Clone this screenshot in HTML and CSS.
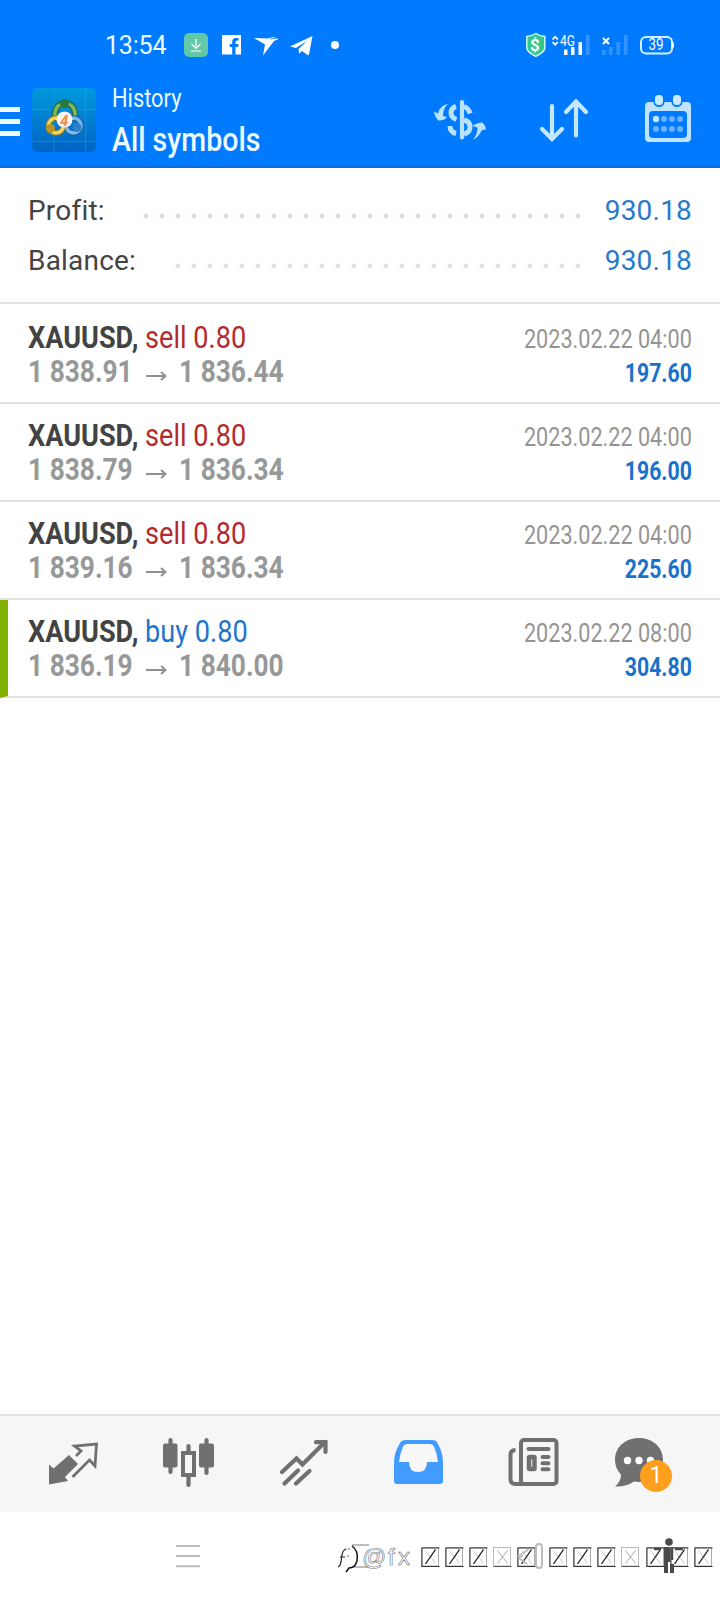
FILE: index.html
```html
<!DOCTYPE html>
<html lang="en">
<head>
<meta charset="utf-8">
<title>History</title>
<link rel="stylesheet" href="styles.css">
</head>
<body>
<div class="screen">
  <header class="header">
    <div class="status">
      <span class="time">13:54</span>
      <svg class="notices" width="164" height="28" viewBox="182 31 164 28" fill="#fff">
        <rect x="184" y="33" width="24" height="24" rx="5" fill="#62c8a8"/>
        <path d="M196 39v9m-4.500-4l4.500 4.500 4.500-4.500M191 51h10" fill="none" stroke="#fff" stroke-width="1.200"/>
        <path d="M222 35h19v19.500h-5.500v-7.500h2.500l.5-3h-3v-2q0-1.500 1.500-1.500h1.500v-2.500h-2.500q-3.800 0-3.800 4v2h-2.500v3h2.500v7.500H222z"/>
        <path d="M254 38l14 .5 5-1.500 5.500 2-4.500 2-11 14.500 2-11z"/>
        <path d="M270 39l6-.6" stroke="#007aff" stroke-width=".8"/>
        <path d="M290 46.500l22.500-10.500-3.500 18.500q-.5 1-1.500.5l-5.500-4 -3 2.800-.5-4.800 8.500-8-11 7z"/>
        <circle cx="335" cy="45" r="4"/>
      </svg>
      <svg class="signals" width="152" height="28" viewBox="524 31 152 28" fill="#fff">
        <path d="M526.800 36.500q5-.5 9-3 4 2.500 9 3v12q-1 4-9 7.800-8-3.800-9-7.800z" fill="#35c78b" stroke="#d9fff4" stroke-width="1.400"/>
        <text x="530" y="51" class="coin">$</text>
        <path d="M552.500 39.500l2.700-2.700 2.700 2.700M552.500 42l2.700 2.700 2.700-2.700" fill="none" stroke="#fff" stroke-width="1.700"/>
        <text x="560" y="46" class="net" textLength="15" lengthAdjust="spacingAndGlyphs">4G</text>
        <path d="M564 49.500h3.500v5.500H564zM571 47h3.500v8H571zM578.500 42h3.500v13h-3.500z"/>
        <path d="M586 35h3.500v20H586zM602 50h3.500v5H602zM609 47h3.500v8H609zM616.500 42h3.500v13h-3.500zM624 35h3.500v20H624z" opacity=".2"/>
        <path d="M603 38l6 6m0-6l-6 6" stroke="#fff" stroke-width="2"/>
        <rect x="641" y="37" width="31" height="16.500" rx="5" fill="none" stroke="#d3f1ff" stroke-width="2"/>
        <path d="M672 41q2 1 2 4t-2 4z"/>
        <text x="648.500" y="50" class="charge" textLength="15" lengthAdjust="spacingAndGlyphs">39</text>
      </svg>
    </div>
    <div class="appbar">
      <span class="burger"></span>
      <svg class="logo" width="64" height="64" viewBox="32 88 64 64">
        <defs>
          <linearGradient id="sea" x1="0" y1="0" x2="0" y2="1"><stop offset="0" stop-color="#0099dc"/><stop offset="1" stop-color="#0064c4"/></linearGradient>
        </defs>
        <rect x="32" y="88" width="64" height="64" rx="6" fill="url(#sea)"/>
        <path d="M32 109.500h64M32 141.500h64M54 88v64M85.500 88v64" stroke="#3aa4d8" stroke-width=".7" opacity=".6"/>
        <g fill="none">
          <path d="M56 119q-3-7 2-13 7-6 14 0 5 6 2 13" stroke="#27653a" stroke-width="6"/>
          <path d="M56 119q-3-7 2-13 7-6 14 0 5 6 2 13" stroke="#7ab85c" stroke-width="3.600"/>
          <circle cx="73.500" cy="125.500" r="7.500" stroke="#1c5a98" stroke-width="5.500"/>
          <circle cx="73.500" cy="125.500" r="7.500" stroke="#79b9ee" stroke-width="3.600"/>
          <circle cx="56" cy="125.500" r="7.500" stroke="#8d7a26" stroke-width="5.500"/>
          <circle cx="56" cy="125.500" r="7.500" stroke="#ecd65c" stroke-width="3.600"/>
        </g>
        <circle cx="64.500" cy="103.500" r="4.500" fill="#267a3a"/><circle cx="50.500" cy="128.500" r="4.500" fill="#b99722"/><circle cx="77" cy="127.500" r="4.500" fill="#2b7fcc"/>
        <circle cx="64.500" cy="119.500" r="8" fill="#fff5ee"/>
        <text x="60" y="125.500" class="four">4</text>
      </svg>
      <div class="titles">
        <span class="sub">History</span>
        <span class="main">All symbols</span>
      </div>
      <svg class="act dollar" width="54" height="44" viewBox="433 97 54 44">
        <g fill="none" stroke="#b9e2ff" stroke-width="5">
          <path d="M462 101v35.500" stroke-width="4.200" stroke-linecap="round"/>
          <path d="M456 105.500q-5 1.500-5 6.500 0 4.500 5.500 6.500M450 125q0 6 6 7.500M464 105.500q4.500 1.500 6 7M464 119q6 1.500 6 7 0 5.500-6 7"/>
        </g>
        <g fill="#b9e2ff">
          <path d="M448 103q-5 4-5 12l4 1q-3 4-9 3.500-3.500-4-4-9l4 2q2-8.500 10-9.500z"/>
          <path d="M473 139q6-3.500 9-10l4-.5q0-3.500-3.500-7-6 0-10 3.500l5 1.500q0 7-4.500 12.500z"/>
        </g>
      </svg>
      <svg class="act sort" width="52" height="46" viewBox="538 96 52 46" fill="none" stroke="#c4e8ff" stroke-width="4.200" stroke-linecap="round">
        <path d="M552 105v33M542 128l10 10 10-10M576 134.500V101M566 111l10-10.500 10 10.500"/>
      </svg>
      <svg class="act cal" width="48" height="50" viewBox="644 94 48 50">
        <path d="M649 102h38q4 0 4 4v32q0 4-4 4h-38q-4 0-4-4v-32q0-4 4-4z" fill="#bfe4ff"/>
        <rect x="649" y="111" width="38" height="27" rx="4" fill="#007aff"/>
        <rect x="653.500" y="93" width="11" height="14" rx="5" fill="#007aff"/><rect x="671.500" y="93" width="11" height="14" rx="5" fill="#007aff"/>
        <rect x="655" y="95" width="8" height="10" rx="3.500" fill="#c8ebff"/><rect x="673" y="95" width="8" height="10" rx="3.500" fill="#c8ebff"/>
        <g fill="#6ab2ff"><circle cx="656" cy="119" r="3.200" fill="#c4e8ff"/><circle cx="664" cy="119" r="3"/><circle cx="672" cy="119" r="3"/><circle cx="680" cy="119" r="3"/><circle cx="656" cy="129" r="3"/><circle cx="664" cy="129" r="3"/><circle cx="672" cy="129" r="3"/><circle cx="680" cy="129" r="3"/></g>
      </svg>
    </div>
  </header>

  <section class="summary">
    <div class="total"><span>Profit:</span><i class="dots"></i><span class="sum">930.18</span></div>
    <div class="total"><span>Balance:</span><i class="dots short"></i><span class="sum">930.18</span></div>
  </section>

  <main class="deals">
    <article class="deal">
      <div class="left"><p class="order"><b>XAUUSD,</b> <span class="sell">sell 0.80</span></p>
        <p class="prices"><span class="price">1 838.91</span><svg class="arrow" width="22" height="10" viewBox="0 0 22 10"><path d="M0 5h19.500M15 1l4.500 4L15 9"/></svg><span class="price">1 836.44</span></p></div>
      <div class="right"><p class="date">2023.02.22 04:00</p><p class="gain">197.60</p></div>
    </article>
    <article class="deal">
      <div class="left"><p class="order"><b>XAUUSD,</b> <span class="sell">sell 0.80</span></p>
        <p class="prices"><span class="price">1 838.79</span><svg class="arrow" width="22" height="10" viewBox="0 0 22 10"><path d="M0 5h19.500M15 1l4.500 4L15 9"/></svg><span class="price">1 836.34</span></p></div>
      <div class="right"><p class="date">2023.02.22 04:00</p><p class="gain">196.00</p></div>
    </article>
    <article class="deal">
      <div class="left"><p class="order"><b>XAUUSD,</b> <span class="sell">sell 0.80</span></p>
        <p class="prices"><span class="price">1 839.16</span><svg class="arrow" width="22" height="10" viewBox="0 0 22 10"><path d="M0 5h19.500M15 1l4.500 4L15 9"/></svg><span class="price">1 836.34</span></p></div>
      <div class="right"><p class="date">2023.02.22 04:00</p><p class="gain">225.60</p></div>
    </article>
    <article class="deal marked">
      <div class="left"><p class="order"><b>XAUUSD,</b> <span class="buy">buy 0.80</span></p>
        <p class="prices"><span class="price">1 836.19</span><svg class="arrow" width="22" height="10" viewBox="0 0 22 10"><path d="M0 5h19.500M15 1l4.500 4L15 9"/></svg><span class="price">1 840.00</span></p></div>
      <div class="right"><p class="date">2023.02.22 08:00</p><p class="gain">304.80</p></div>
    </article>
  </main>

  <nav class="tabs">
    <svg width="50" height="60" viewBox="49 1435 50 60">
      <path d="M69 1455l9 9-13 13 3 4-19 3.500v-20l4.500 4z" fill="#707070"/>
      <path d="M76 1456l5-5-6.500-5 22-2-1.500 22-5.500-6-17 17" fill="none" stroke="#707070" stroke-width="2.800"/>
    </svg>
    <svg width="52" height="60" viewBox="163 1435 52 60" fill="#707070">
      <rect x="163" y="1443.500" width="14.500" height="24" rx="2"/><rect x="199" y="1443.500" width="15" height="24" rx="2"/>
      <path d="M170.500 1440v32M206.500 1440v33M188.500 1446v7M188.500 1477v8" stroke="#707070" stroke-width="4.200" stroke-linecap="round"/>
      <rect x="183" y="1453" width="11" height="22" fill="none" stroke="#707070" stroke-width="4"/>
    </svg>
    <svg width="50" height="60" viewBox="278 1435 50 60" fill="none" stroke="#707070" stroke-width="4.200">
      <path d="M281 1472l14.500-13.500 6 6L324 1442M283.500 1483.500l13.500-13M295 1483.500l13.500-12.500" stroke-linecap="round"/>
      <path d="M315 1442.200h9.500v9.800" stroke-linecap="round"/>
    </svg>
    <svg width="50" height="60" viewBox="393 1435 50 60">
      <path d="M406 1440h26q4 0 5.500 3 5.500 10 5.500 19v19q0 3-3 3h-43q-3 0-3-3v-19q0-9 6-19 1.500-3 6-3z" fill="#429bff"/>
      <path d="M407 1444h23q3 0 4 2.500 3 7 4 15.500h-11q0 10-9 10t-9-10h-10q1-8.500 4-15.500 1-2.500 4-2.500z" fill="#f8f8f8"/>
    </svg>
    <svg width="52" height="60" viewBox="507 1435 52 60" fill="none" stroke="#707070" stroke-width="4">
      <rect x="521" y="1440" width="35.500" height="44" rx="3"/>
      <path d="M515.500 1450q-5 0-5 4.500v25q0 4.500 5 4.500h8"/>
      <path d="M528.500 1449h20M542.500 1457h6M542.500 1463.200h6M542.500 1469.200h6" stroke-linecap="round"/>
      <rect x="529" y="1457" width="5.500" height="12" rx=".5" stroke-width="4.500"/>
    </svg>
    <div class="chat">
      <svg width="50" height="60" viewBox="614 1435 50 60">
        <path d="M639 1438c14 0 24 9.500 24 22s-10 22-24 22l-5-.5q-8 5.500-19 5 6-5 6-12-6-6-6-14.500c0-12.500 10-22 24-22z" fill="#707070"/>
        <g fill="#fff"><circle cx="627.500" cy="1460.500" r="3.700"/><circle cx="639" cy="1460.500" r="3.700"/><circle cx="650.500" cy="1460.500" r="3.700"/></g>
      </svg>
      <span class="badge">1</span>
    </div>
  </nav>

  <footer class="system">
    <svg width="720" height="88" viewBox="0 1512 720 88" fill="none">
      <path d="M176 1546h24M176 1556h24M176 1566.300h24" stroke="#bcbcbc" stroke-width="2"/>
      <path d="M352 1545h17M352 1567h17" stroke="#bcbcbc" stroke-width="2"/>
      <g fill="#4a4a4a"><circle cx="669" cy="1542" r="3.800"/><path d="M653 1547h32v3.500l-11 1.500v21h-4v-11h-2v11h-4v-21l-11-1.500z"/></g>
      <path d="M338 1567q3-1 3.500-9 .7-8.500 5-9M340 1557h5" stroke="#222" stroke-width="1.200"/>
      <path d="M352 1546q7 5 5 15-2 7-8 7l-3 4" stroke="#111" stroke-width="1.500"/>
      <path d="M347 1556h2M348 1549h2" stroke="#999" stroke-width="1.500"/>
      <text class="mark-text" x="362 388 398" y="1565">@fx</text>
      <defs>
        <g id="cell"><rect width="17" height="18.500" fill="#fff" stroke="#aaa"/><path d="M.5 19V.5H18M0 19h18" stroke="#333"/><path d="M4 3l10 13" stroke="#bbb" stroke-width=".8"/><path d="M14 2L4 16.500" stroke="#111" stroke-width="1.300"/></g>
        <g id="pale"><rect width="17" height="18.500" fill="#fff" stroke="#bbb"/><path d="M0 19h18" stroke="#555"/><path d="M4 3l10 13M14 3L4 16" stroke="#999" stroke-width=".8"/></g>
      </defs>
      <use href="#cell" x="421.500" y="1547.500"/><use href="#cell" x="445.500" y="1547.500"/><use href="#cell" x="469.500" y="1547.500"/><use href="#pale" x="493.500" y="1547.500"/><use href="#cell" x="517.500" y="1547.500"/>
      <use href="#cell" x="549.500" y="1547.500"/><use href="#cell" x="573.500" y="1547.500"/><use href="#cell" x="597.500" y="1547.500"/><use href="#pale" x="621.500" y="1547.500"/><use href="#cell" x="646.500" y="1547.500"/><use href="#cell" x="670.500" y="1547.500"/><use href="#cell" x="694.500" y="1547.500"/>
      <path d="M529 1549l-10 7 4 .5M519 1558l8 6" stroke="#bcbcbc" stroke-width="2"/>
      <rect x="536" y="1544" width="6" height="24" rx="3" fill="#fff" stroke="#bcbcbc" stroke-width="2"/>
      <path d="M666 1548v25M672 1564v9" stroke="#4a4a4a" stroke-width="4"/>
      <path d="M672 1547v13M654 1549h7M675 1549h8" stroke="#4a4a4a" stroke-width="2.500"/>
    </svg>
  </footer>
</div>
</body>
</html>
```
FILE: styles.css
```css
* { box-sizing: border-box; }
body, p { margin: 0; }
body { font-family: Roboto, "Liberation Sans", sans-serif; background: #fff; }
svg { display: block; flex: none; }
.screen { width: 720px; height: 1600px; display: flex; flex-direction: column; overflow: hidden; }

.header { height: 168px; background: #007aff; color: #ecfbff; border-bottom: 2px solid #0a6fd6; }
.status { display: flex; align-items: center; height: 80px; padding: 10px 44px 0 105px; }
.time { width: 77px; padding-top: 1px; font-size: 25px; line-height: 28px; letter-spacing: -.2px; white-space: nowrap; }
.signals { margin-left: auto; }
.coin { font-size: 17px; font-weight: 700; fill: #fff; }
.net { font-size: 15px; fill: #fff; }
.charge { font-size: 16px; fill: #fff; }
.four { font-size: 15px; font-weight: 700; font-style: italic; fill: #ef8d4b; }
.appbar { display: flex; align-items: center; height: 80px; }
.burger { width: 20px; height: 29px; margin: 2px 12px 0 0; background: repeating-linear-gradient(#ecfbff 0 5px, transparent 5px 12px); }
.titles { display: flex; flex-direction: column; width: 200px; margin: 0 0 0 16px; }
.sub, .main { transform: scaleX(.84); transform-origin: left; white-space: nowrap; }
.sub { font-size: 26px; line-height: 38px; }
.main { font-size: 34px; font-weight: 500; line-height: 44px; }
.dollar { margin-left: 121px; }
.sort { margin-left: 51px; }
.cal { margin-left: 54px; margin-bottom: 2px; }

.summary { height: 136px; padding: 18px 28px 0; border-bottom: 2px solid #e3e3e3; color: #444; font-size: 28px; line-height: 50px; }
.total { display: flex; align-items: center; letter-spacing: .2px; }
.dots { width: 448px; height: 16px; margin: 0 18px 0 auto; background: radial-gradient(circle at 8px 8px, #e2e2e2 2.300px, transparent 2.900px) 0 0 / 16px 16px; position: relative; top: 5px; }
.dots.short { width: 416px; }
.sum { width: 88px; color: #2b78c8; text-align: right; }

.deal { display: flex; justify-content: space-between; height: 98px; padding: 14px 28px 0; border-bottom: 2px solid #e3e3e3; line-height: 34px; white-space: nowrap; }
.deal:first-child { height: 100px; padding-top: 16px; }
.deal.marked { padding-left: 20px; border-left: 8px solid #80b000; }
.order { font-size: 32px; transform: scaleX(.847); transform-origin: left; }
.order b { color: #434343; }
.sell { color: #b52a2c; }
.buy { color: #1e76cc; }
.prices { display: flex; align-items: center; width: 260px; color: #979999; font-size: 32px; font-weight: 700; }
.price { width: 106px; transform: scaleX(.822); transform-origin: left; }
.arrow { margin: 9px 11px 0 12px; fill: none; stroke: #8f9191; stroke-width: 2; }
.right { padding-top: 2px; text-align: right; font-size: 26px; }
.date, .gain { transform-origin: right; }
.date { color: #949494; transform: scaleX(.832); }
.gain { color: #1872cc; font-weight: 700; transform: scaleX(.815); }

.tabs { display: flex; height: 98px; margin-top: auto; padding: 19px 0 0 49px; background: #f6f6f6; border-top: 2px solid #e3e3e3; }
.tabs > svg { margin-right: 64px; }
.chat { position: relative; margin-left: -9px; }
.badge { position: absolute; left: 26px; top: 25px; width: 32px; height: 32px; border-radius: 50%; background: #ff9f1e; color: #fff; font-size: 23px; line-height: 32px; text-align: center; }
.system { height: 88px; }
.mark-text { font-family: "Liberation Sans", sans-serif; font-size: 24px; fill: #fff; stroke: #777; stroke-width: .6; }
```
